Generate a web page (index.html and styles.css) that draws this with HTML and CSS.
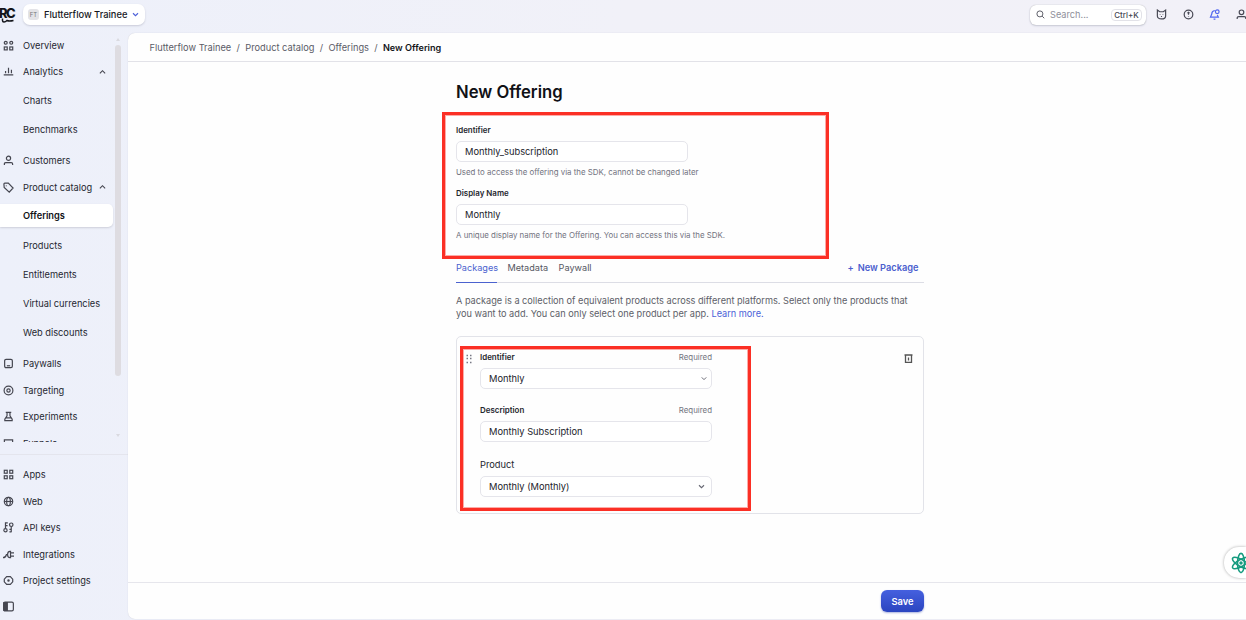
FILE: index.html
```html
<!DOCTYPE html>
<html lang="en">
<head>
<meta charset="utf-8">
<title>New Offering</title>
<link rel="stylesheet" href="styles.css">
</head>
<body>
<div class="app">
  <header class="topbar">
    <div class="logo"><span>RC</span><svg width="15" height="6" viewBox="0 0 15 6"><path d="M2.500 .5v2q0 1.500 1.500 1.500T7 2.500Q9 3.500 13.500 2.500"/></svg></div>
    <button class="project"><span class="project-tag">FT</span><span class="project-name">Flutterflow Trainee</span><svg class="caret" viewBox="0 0 8 6"><path d="M1 1.500l3 3 3-3"/></svg></button>
    <div class="tools">
      <div class="search"><svg viewBox="0 0 12 12" width="9" height="9"><circle cx="5.200" cy="5.200" r="4"/><path d="M8.200 8.200L11 11"/></svg><span class="search-text">Search...</span><kbd>Ctrl+K</kbd></div>
      <svg class="tool" viewBox="0 0 12 12"><path d="M1.500 1.200L4 3h4l2.500-1.800V7.500Q10.500 10.800 6 10.800T1.500 7.500zM4.500 5.700v.6M7.500 5.700v.6M5.400 8.200h1.200"/></svg>
      <svg class="tool" viewBox="0 0 12 12"><circle cx="6" cy="6" r="4.700"/><path d="M6 3.700v2.600M6 7.800v.7M4.900 4.700L6 3.700l1.100 1"/></svg>
      <svg class="tool bell" viewBox="0 0 12 12"><path d="M6.300 1.600Q3 2 3 5.500L1.600 8.800h8.600L9 6.500M5 11h2"/><circle cx="9" cy="3" r="2"/></svg>
      <svg class="tool" viewBox="0 0 12 12"><circle cx="6" cy="3.600" r="2.500"/><path d="M1.300 11V9.800Q1.300 8.300 3 8.300h6q1.700 0 1.700 1.500V11"/></svg>
    </div>
  </header>
  <aside class="sidebar">
    <div class="scroller">
      <nav class="nav">
        <a class="item"><svg viewBox="0 0 12 12"><circle cx="3" cy="3" r="1.600"/><circle cx="9" cy="3" r="1.600"/><rect x="1.400" y="7.600" width="3.200" height="3.200"/><rect x="7.400" y="7.600" width="3.200" height="3.200"/></svg><span>Overview</span></a>
        <a class="item"><svg viewBox="0 0 12 12"><path d="M.8 9.700h10.400M2.800 8V5.500M6 8V1.800M9.200 8V4.200"/></svg><span>Analytics</span><svg class="chev" viewBox="0 0 8 6"><path d="M1 4.500l3-3 3 3"/></svg></a>
        <div class="group">
          <a class="sub">Charts</a>
          <a class="sub">Benchmarks</a>
        </div>
        <a class="item"><svg viewBox="0 0 12 12"><circle cx="6" cy="3.600" r="2.300"/><path d="M1.500 11V9.800Q1.500 8.300 3 8.300h6q1.500 0 1.500 1.500V11"/></svg><span>Customers</span></a>
        <a class="item"><svg viewBox="0 0 12 12"><path d="M1 2.300q0-1 1-1h3.800L11 6.500 6.800 11 1.300 6z"/><path d="M3.600 3.800v.7"/></svg><span>Product catalog</span><svg class="chev" viewBox="0 0 8 6"><path d="M1 4.500l3-3 3 3"/></svg></a>
        <div class="group">
          <a class="sub active"><span>Offerings</span></a>
          <a class="sub">Products</a>
          <a class="sub">Entitlements</a>
          <a class="sub">Virtual currencies</a>
          <a class="sub">Web discounts</a>
        </div>
        <a class="item"><svg viewBox="0 0 12 12"><rect x="1.800" y="1.500" width="8.400" height="9" rx="1.500"/><path d="M4.200 8.500h3.600"/></svg><span>Paywalls</span></a>
        <a class="item"><svg viewBox="0 0 12 12"><circle cx="6" cy="6" r="4.800"/><circle cx="6" cy="6" r="1.800"/></svg><span>Targeting</span></a>
        <a class="item"><svg viewBox="0 0 12 12"><path d="M3 1.500h6M4.400 1.500v3.700L2 8.800v1.700h8V8.800L7.600 5.200V1.500M3.200 7.500h5.600"/></svg><span>Experiments</span></a>
        <a class="item cut"><svg viewBox="0 0 12 12"><path d="M1.500 2h9v3H9v6H3V5H1.500z"/></svg><span>Funnels</span></a>
      </nav>
      <div class="scrollbar"><i class="up"></i><i class="thumb"></i><i class="down"></i></div>
    </div>
    <nav class="nav bottom">
      <a class="item"><svg viewBox="0 0 12 12"><rect x="1.400" y="1.400" width="3.200" height="3.200"/><rect x="7.400" y="1.400" width="3.200" height="3.200"/><rect x="1.400" y="7.400" width="3.200" height="3.200"/><rect x="7.400" y="7.400" width="3.200" height="3.200"/></svg><span>Apps</span></a>
      <a class="item"><svg viewBox="0 0 12 12"><circle cx="6" cy="6" r="4.600"/><ellipse cx="6" cy="6" rx="2" ry="4.600"/><path d="M1.400 6h9.200"/></svg><span>Web</span></a>
      <a class="item"><svg viewBox="0 0 12 12"><circle cx="2.700" cy="9" r="1.800"/><path d="M2.700 7V1h2.500M2.700 4H5"/><circle cx="9" cy="3" r="1.900"/><path d="M9 5v6.300M9 8H7M9 10.700H7"/></svg><span>API keys</span></a>
      <a class="item"><svg viewBox="0 0 12 12"><path d="M0 9.500Q3 9.500 3.800 6H5M8.200 2.500v7H7.500Q5 9.500 5 6T7.500 2.500zM8.200 4.300H12M8.200 7.800H12"/></svg><span>Integrations</span></a>
      <a class="item"><svg viewBox="0 0 12 12"><path d="M4 1.700h4l2.600 2.800v3L8 10.300H4L1.400 7.500v-3z"/><circle cx="6" cy="6" r=".7"/></svg><span>Project settings</span></a>
      <a class="item"><svg viewBox="0 0 12 12"><rect x="0.700" y="1.200" width="10.600" height="9.600" rx="1.500"/><path class="solid" d="M1 1.700h3.700v8.600H1z"/></svg></a>
    </nav>
  </aside>
  <main class="panel">
    <div class="crumbs"><span>Flutterflow Trainee</span><i>/</i><span>Product catalog</span><i>/</i><span>Offerings</span><i>/</i><b>New Offering</b></div>
    <div class="content">
      <h1>New Offering</h1>
      <section class="fields">
        <label class="label">Identifier</label>
        <div class="input">Monthly_subscription</div>
        <p class="help">Used to access the offering via the SDK, cannot be changed later</p>
        <label class="label">Display Name</label>
        <div class="input">Monthly</div>
        <p class="help">A unique display name for the Offering. You can access this via the SDK.</p>
      </section>
      <div class="tabs"><a class="tab on">Packages</a><a class="tab">Metadata</a><a class="tab">Paywall</a><a class="new"><span class="plus">+</span>New Package</a></div>
      <p class="intro">A package is a collection of equivalent products across different platforms. Select only the products that<br>you want to add. You can only select one product per app. <a>Learn more.</a></p>
      <section class="card">
        <svg class="grip" viewBox="0 0 6 10"><path d="M.5 1.500h1.500M4 1.500h1.500M.5 4.500h1.500M4 4.500h1.500M.5 8.500h1.500M4 8.500h1.500"/></svg>
        <div class="form">
          <div class="row"><label class="label">Identifier</label><span class="req">Required</span></div>
          <div class="input">Monthly<svg class="caret small" viewBox="0 0 8 6"><path d="M1 1.500l3 3 3-3"/></svg></div>
          <div class="row"><label class="label">Description</label><span class="req">Required</span></div>
          <div class="input">Monthly Subscription</div>
          <div class="row last"><label class="plain">Product</label></div>
          <div class="input">Monthly (Monthly)<svg class="caret" viewBox="0 0 8 6"><path d="M1 1.500l3 3 3-3"/></svg></div>
        </div>
        <svg class="trash" viewBox="0 0 9 9"><path d="M.5 1h8M1.500 1v7.400h6V1M4.500 3.500v3"/></svg>
      </section>
    </div>
    <footer class="actions"><button class="save">Save</button></footer>
  </main>
</div>
<div class="mark mark-fields"></div>
<div class="mark mark-package"></div>
<div class="chat"><svg viewBox="-12 -12 24 24"><g><ellipse rx="3.800" ry="10.500"/><ellipse rx="3.800" ry="10.500" transform="rotate(60)"/><ellipse rx="3.800" ry="10.500" transform="rotate(120)"/></g><circle r="1.900"/></svg></div>
</body>
</html>
```
FILE: styles.css
```css
* { box-sizing: border-box; }
body { margin: 0; font-family: Inter, "Liberation Sans", sans-serif; color: #24262f; font-size: 9.250px; overflow: hidden; white-space: nowrap; }
h1, p { margin: 0; }
i, kbd { font-style: normal; font-family: inherit; }
button { font-family: inherit; border: 0; padding: 0; }
svg { fill: none; stroke: currentColor; stroke-width: 1.3; flex: none; display: block; }

.app { height: 620px; display: grid; grid-template: 33px 587px / 128px 1fr; background: linear-gradient(90deg, #edf0fa, #f1f1f8 50%, #f2f1f8); }

.topbar { grid-column: 1 / 3; display: flex; align-items: flex-start; padding-top: 4px; }
.logo { width: 23px; height: 20px; padding-top: 3px; color: #14151a; }
.logo span { display: block; font-size: 13px; font-weight: 800; line-height: 12px; letter-spacing: -1.500px; margin-left: -1px; }
.logo svg { stroke-width: 1.500; margin-top: -1px; }
.project { display: flex; align-items: center; width: 122px; height: 21px; padding: 0 6px 0 5px; border-radius: 7px; background: #fff; box-shadow: 0 1px 2px #c9cbd8; }
.project-tag { width: 11px; height: 11px; border-radius: 3px; background: #e3e3e7; color: #777; font-size: 6px; line-height: 11px; text-align: center; }
.project-name { margin-left: 5px; font-size: 9.300px; font-weight: 500; color: #16171d; }
.project .caret { margin-left: auto; color: #4b5fd8; }
.caret { width: 7px; height: 5px; }
.tools { display: flex; align-items: center; margin-left: auto; height: 21px; margin-right: -0.500px; }
.search { display: flex; align-items: center; width: 116px; height: 20px; margin-right: 4.500px; padding: 0 4px 0 6px; border-radius: 6px; background: #fff; box-shadow: 0 0 1px #aaa, 0 1px 2px #c9cbd8; color: #5a5b66; }
.search-text { margin-left: 5px; font-size: 9.200px; color: #8f909a; }
kbd { margin-left: auto; width: 31px; height: 12px; border: 1px solid #e2e2e8; border-radius: 4px; font-size: 7.900px; line-height: 10px; font-weight: 500; text-align: center; color: #44454f; }
.tool { width: 11px; height: 11px; margin-left: 5.500px; margin-right: 10px; color: #484955; }
.tool:last-child { margin-right: 0; }
.bell { color: #5166ef; }

.sidebar { display: flex; flex-direction: column; }
.scroller { display: flex; height: 410px; overflow: hidden; }
.nav { width: 113px; margin-top: -1px; }
.item { display: flex; align-items: center; height: 26.400px; padding-left: 3px; }
.item svg { width: 11px; height: 11px; margin-right: 9px; color: #454650; }
.item .chev { width: 7px; height: 6px; margin: 0 7px 0 auto; }
.cut { padding-top: 2px; }
.group { padding: 1px 0 4px; }
.sub { display: flex; align-items: center; height: 29px; padding-left: 23px; }
.active { padding: 0 0 2px; }
.active span { width: 113px; height: 23px; padding-left: 23px; line-height: 23px; border-radius: 0 5px 5px 0; background: #fff; box-shadow: 0 1px 2px #cdcfda; font-weight: 600; color: #111217; }
.scrollbar { display: flex; flex-direction: column; width: 6px; margin-left: 2px; align-items: center; padding: 5px 0; }
.thumb { width: 6px; height: 331px; margin-top: 4px; border-radius: 3px; background: #dedce1; }
.up, .down { border: 2.500px solid transparent; border-top: 0; border-bottom: 3px solid #dadae0; height: 3px; }
.down { border-top: 3px solid #dadae0; border-bottom: 0; margin-top: auto; }
.bottom { width: 128px; margin-top: 12px; border-top: 1px solid #e4e5ed; padding-top: 6.700px; }
.solid { fill: #454650; }

.panel { display: flex; flex-direction: column; height: 586px; background: #fefefe; box-shadow: 0 0 1px #c3c4d0; border-radius: 7px 0 0 7px; }
.crumbs { display: flex; align-items: center; height: 29px; padding-left: 21.500px; border-bottom: 1px solid #e2e2e8; color: #5a5b66; }
.crumbs i { width: 14px; text-align: center; }
.crumbs b { font-weight: 600; font-size: 9.100px; color: #14151a; }
.content { flex: 1; width: 468px; margin-left: 328px; }
h1 { margin-top: 20px; height: 20px; line-height: 21px; font-size: 16.650px; font-weight: 600; color: #101116; }
.fields { padding-top: 22px; height: 156px; }
.label { display: block; height: 12px; line-height: 12px; font-size: 7.950px; font-weight: 600; color: #24252d; }
.input { display: flex; align-items: center; justify-content: space-between; width: 232px; height: 21px; margin-top: 5px; padding: 0 8px; border: 1px solid #e5e5eb; border-radius: 5px; background: #fff; font-size: 9.300px; color: #22232b; }
.help { margin-top: 4px; height: 12px; line-height: 13px; font-size: 7.870px; color: #72737e; }
.help + .label { margin-top: 9px; }
.tabs { display: flex; height: 25px; border-bottom: 1px solid #dcdde5; gap: 10.500px; line-height: 19px; font-size: 9.150px; color: #555661; }
.on { height: 25px; width: 41px; color: #4b62cf; border-bottom: 1.500px solid #4b62cf; }
.new { margin-left: auto; padding-right: 5.500px; font-weight: 600; font-size: 9.250px; color: #4b5fce; }
.plus { margin-right: 4px; }
.intro { margin-top: 11px; line-height: 13.300px; font-size: 9.190px; color: #5d5e68; }
.intro a { color: #4b62d8; }
.card { display: flex; height: 178px; margin-top: 15px; padding: 14px 10px 0 9px; border: 1px solid #e2e3e9; border-radius: 5px; }
.grip { width: 6px; height: 10px; margin-top: 3px; color: #777884; }
.form { width: 232px; margin-left: 8px; }
.row { display: flex; justify-content: space-between; height: 12px; line-height: 13px; }
.row .label { line-height: 13px; }
.input + .row { margin-top: 15px; }
.input + .last { margin-top: 16.500px; height: 13px; line-height: 14px; }
.req { font-size: 7.900px; color: #73747e; }
.plain { font-size: 9.300px; }
.form .caret { margin-right: -2px; color: #666772; }
.form .small { width: 6px; margin-right: -4px; }
.trash { width: 9px; height: 9px; margin: 3px 0 0 auto; color: #555; }
.actions { display: flex; height: 37px; border-top: 1px solid #e6e6ec; padding: 7px 0 0 753px; }
.save { width: 43px; height: 22px; border-radius: 6px; background: linear-gradient(#4560df, #2b45c0); box-shadow: 0 1px 2px #aab2dd; color: #fff; font-size: 9.300px; font-weight: 600; }

.mark { position: absolute; border: 3px solid #fb2f25; box-shadow: inset 0 0 0 1px #fb2f2566; }
.mark-fields { left: 442px; top: 112px; width: 387px; height: 147px; }
.mark-package { left: 460px; top: 346px; width: 291px; height: 165px; }
.chat { position: absolute; left: 1224px; top: 547px; width: 22px; height: 31px; padding: 5px 0 0 6px; border-radius: 15px 0 0 15px; background: #fff; box-shadow: 0 0 3px #aaa; overflow: hidden; }
.chat svg { width: 22px; height: 22px; color: #159b7f; stroke-width: 1.700; }
.chat circle { fill: #159b7f; stroke: none; }
```
